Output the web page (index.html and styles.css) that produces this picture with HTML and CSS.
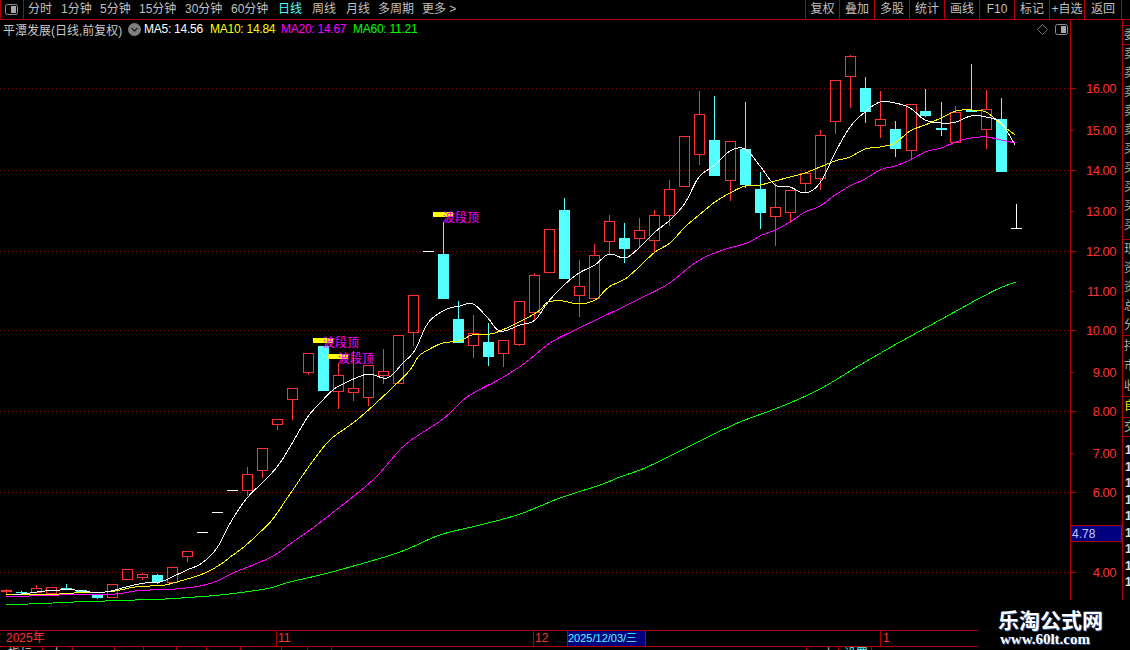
FILE: index.html
```html
<!DOCTYPE html>
<html lang="zh">
<head>
<meta charset="utf-8">
<title>平潭发展</title>
<link rel="stylesheet" href="styles.css">
</head>
<body>
<div class="app">
  <header class="topbar">
    <div class="panel-btn">
      <svg class="panel-icon" width="13" height="11" viewBox="0 0 13 11"><rect x="0.5" y="0.5" width="12" height="10" rx="2" class="pi-frame"/><rect x="6" y="2" width="5" height="7" class="pi-fill"/></svg>
    </div>
    <nav class="periods">
      <span class="p w-a">分时</span>
      <span class="p w-b">1分钟</span>
      <span class="p w-b">5分钟</span>
      <span class="p w-c">15分钟</span>
      <span class="p w-c">30分钟</span>
      <span class="p w-f">60分钟</span>
      <span class="p w-g active">日线</span>
      <span class="p w-g">周线</span>
      <span class="p w-d">月线</span>
      <span class="p w-e">多周期</span>
      <span class="p">更多 &gt;</span>
    </nav>
    <nav class="tools">
      <span class="t t-first">复权</span>
      <span class="t">叠加</span>
      <span class="t">多股</span>
      <span class="t">统计</span>
      <span class="t">画线</span>
      <span class="t">F10</span>
      <span class="t">标记</span>
      <span class="t">+自选</span>
      <span class="t t-last">返回</span>
    </nav>
  </header>

  <main class="main">
    <section class="plot">
      <div class="legend">
        <span class="title">平潭发展(日线,前复权)</span>
        <svg class="circle-icon" width="13" height="13" viewBox="0 0 13 13"><circle cx="6.5" cy="6.5" r="6.5" class="ci-bg"/><path d="M3.5 5l3 3 3-3" class="ci-chev"/></svg>
        <span class="ma ma5">MA5: 14.56</span>
        <span class="ma ma10">MA10: 14.84</span>
        <span class="ma ma20">MA20: 14.67</span>
        <span class="ma ma60">MA60: 11.21</span>
        <span class="legend-tools">
          <svg width="11" height="11" viewBox="0 0 11 11"><path d="M5.5 0.5l5 5-5 5-5-5z" class="diamond"/></svg>
          <svg width="13" height="11" viewBox="0 0 13 11"><rect x="0.5" y="0.5" width="12" height="10" rx="2" class="pi-frame"/><rect x="6" y="2" width="5" height="7" class="pi-fill"/></svg>
        </span>
      </div>
      <svg id="chart" class="chart" width="1122" height="562" viewBox="0 38 1122 562"></svg>
    </section>
    <aside class="side">
      <div class="s-block s-head"><span>委</span></div>
      <div class="s-block s-quote">
        <span>卖</span><span>卖</span><span>卖</span><span>卖</span><span>卖</span><span>买</span><span>买</span><span>买</span><span>买</span><span>买</span>
      </div>
      <div class="s-block s-fund">
        <span>现</span><span>资</span><span>资</span><span>总</span><span>分</span>
      </div>
      <div class="s-block s-hold">
        <span>持</span><span>市</span><span>收</span>
      </div>
      <div class="s-block s-self"><span>自</span></div>
      <div class="s-block s-trade"><span>交</span></div>
      <div class="s-nums">
        <span>1</span><span>1</span><span>1</span><span>1</span><span>1</span><span>1</span><span>1</span><span>1</span><span>1</span>
      </div>
    </aside>
  </main>

  <footer class="bottom">
    <div class="bottom-left">
      <div class="gap-row"></div>
      <div class="dates">
        <span class="d d-year">2025年</span>
        <span class="d d-nov">11</span>
        <span class="d d-dec">12</span>
        <span class="d-cursor">2025/12/03/三</span>
        <span class="d d-jan">1</span>
      </div>
      <div class="tabs">
        <span class="tab tab-1">指标</span>
        <span class="tab tab-2">上</span>
        <span class="tab tab-3"></span>
        <span class="tab tab-4"></span>
        <span class="tab tab-5"></span>
        <span class="tab tab-6"></span>
        <span class="tab tab-7"></span>
        <span class="tab tab-8"></span>
        <span class="tab tab-9"></span>
        <span class="tab tab-10"></span>
        <span class="tab tab-fill"></span>
        <span class="tab tab-11">上</span>
        <span class="tab tab-12 tab-cyan">设置</span>
      </div>
    </div>
    <div class="watermark">
      <div class="wm-cn">乐淘公式网</div>
      <div class="wm-en">www.60lt.com</div>
    </div>
  </footer>
</div>
<script src="chart.js"></script>
</body>
</html>
```
FILE: styles.css
```css
* { box-sizing: border-box; }
html, body { margin: 0; padding: 0; background: #000; }
body { font-family: "Liberation Sans", "Noto Sans CJK SC", sans-serif; }
.app { width: 1130px; height: 650px; background: #000; overflow: hidden; display: flex; flex-direction: column; color: #c8c8c8; }

.topbar { height: 20px; flex: none; display: flex; border-bottom: 1px solid #b00000; font-size: 12px; line-height: 19px; }
.panel-btn { width: 24px; border-right: 1px solid #b00000; border-left: 1px solid #b00000; display: flex; align-items: center; justify-content: center; padding-right: 1px; }
.pi-frame { fill: none; stroke: #909090; }
.pi-fill { fill: #a8a8a8; }
.periods { display: flex; padding-left: 4px; flex: 1; }
.p { color: #c0c0c0; white-space: nowrap; }
.w-a { width: 33px; }
.w-b { width: 39px; }
.w-c { width: 46px; }
.w-d { width: 32px; }
.w-e { width: 44px; }
.w-f { width: 47px; }
.w-g { width: 34px; }
.p.active { color: #54ffff; }
.tools { display: flex; margin-right: 8px; }
.t { width: 35px; text-align: center; border-left: 1px solid #b00000; color: #c0c0c0; white-space: nowrap; }
.t-first { width: 34px; }
.t-last { width: 38px; border-right: 1px solid #b00000; }

.main { height: 580px; flex: none; display: flex; }
.plot { width: 1122px; flex: none; }
.legend { width: 1071px; height: 18px; border-right: 1px solid #b00000; display: flex; align-items: center; font-size: 12px; white-space: nowrap; padding-left: 3px; }
.title { width: 125px; color: #c8c8c8; }
.circle-icon { margin-right: 3px; }
.ci-bg { fill: #808080; }
.ci-chev { fill: none; stroke: #222; stroke-width: 1.4; }
.ma { letter-spacing: -0.25px; }
.ma5 { color: #fff; width: 66px; }
.ma10 { color: #ffff00; width: 71px; }
.ma20 { color: #ff00ff; width: 72px; }
.ma60 { color: #00ff00; }
.legend-tools { margin-left: auto; margin-right: 2px; display: flex; gap: 7px; align-items: center; }
.diamond { fill: none; stroke: #707070; }
.chart { display: block; overflow: visible; }

.side { flex: 1; border-left: 1px solid #b00000; display: flex; flex-direction: column; font-size: 12px; line-height: 19px; overflow: hidden; height: 580px; }
.s-block { border-bottom: 1px solid #b00000; display: flex; flex-direction: column; color: #b0b0b0; }
.s-block span { display: block; width: 12px; margin-left: 1px; flex: none; }
.s-head { margin-top: 5px; height: 20px; line-height: 18px; border-top: 1px solid #b00000; }
.s-quote { height: 195px; overflow: hidden; }
.s-fund { height: 96px; }
.s-hold { height: 61px; line-height: 20px; }
.s-self { height: 21px; color: #e8e800; }
.s-trade { height: 19px; line-height: 18px; }
.s-nums { display: flex; flex-direction: column; color: #e0e0e0; font-weight: bold; padding-left: 2px; padding-top: 5px; }
.s-nums span { display: block; height: 16.5px; line-height: 16px; }

.bottom { flex: 1; display: flex; }
.bottom-left { width: 978px; flex: none; display: flex; flex-direction: column; }
.gap-row { height: 30px; flex: none; }
.dates { height: 17px; flex: none; border-top: 1px solid #b00000; border-bottom: 1px solid #b00000; display: flex; font-size: 12px; line-height: 15px; color: #ff3232; }
.d { display: block; white-space: nowrap; padding-left: 1px; }
.d-year { width: 276px; padding-left: 6px; }
.d-nov { width: 257px; border-left: 1px solid #b00000; }
.d-dec { width: 34px; border-left: 1px solid #b00000; }
.d-cursor { width: 79px; background: #000080; color: #54ffff; border-left: 1px solid #b00000; border-right: 1px solid #b00000; white-space: nowrap; font-size: 11px; }
.d-jan { margin-left: 234px; border-left: 1px solid #b00000; padding-left: 2px; }
.tabs { height: 3px; overflow: hidden; display: flex; font-size: 12px; line-height: 15px; color: #c8c8c8; }
.tab { border-right: 1px solid #b00000; padding-left: 8px; height: 3px; white-space: nowrap; }
.tab-1 { width: 43px; }
.tab-2 { width: 30px; }
.tab-3 { width: 42px; }
.tab-4 { width: 29px; }
.tab-5 { width: 33px; }
.tab-6 { width: 30px; }
.tab-7 { width: 34px; }
.tab-8 { width: 41px; }
.tab-9 { width: 26px; }
.tab-10 { width: 24px; }
.tab-fill { width: 475px; border-right: 1px solid #b00000; }
.tab-11 { width: 32px; padding-left: 16px; }
.tab-12 { width: 33px; padding-left: 5px; }
.tab-cyan { color: #54ffff; }

.watermark { flex: 1; padding: 7px 0 0 20px; white-space: nowrap; }
.wm-cn { font-family: "Noto Sans CJK SC", sans-serif; font-weight: 700; font-size: 21px; line-height: 24px; color: #fff; text-shadow: 1px 1px 0 #2a4a90; }
.wm-en { font-family: "Liberation Serif", serif; font-weight: 700; font-size: 15px; line-height: 15px; color: #fff; text-shadow: 1px 1px 0 #2a4a90; padding-left: 2px; margin-top: 1px; }

.grid { stroke: #8a0000; stroke-dasharray: 1 3; }
.axis { stroke: #b00000; }
.lbl { fill: #ff3232; font-size: 13px; letter-spacing: -0.5px; text-anchor: end; font-family: "Liberation Sans", sans-serif; }
.wick-up, .body-up { stroke: #ff3232; fill: none; }
.body-doji { fill: #ff3232; }
.wick-dn { stroke: #54ffff; }
.body-dn { fill: #54ffff; }
.wick-w { stroke: #fff; }
.line { fill: none; stroke-width: 1; }
.l5 { stroke: #fff; }
.l10 { stroke: #ffff00; }
.l20 { stroke: #ff00ff; }
.l60 { stroke: #00ff00; }
.sig-bar { fill: #ffff00; }
.sig-text { fill: #ff00ff; font-size: 12px; font-family: "Noto Sans CJK SC", sans-serif; }
.tag-box { fill: #000080; stroke: #b00000; }
.tag-text { fill: #c8c8ff; font-size: 12px; font-family: "Liberation Sans", sans-serif; }
```
FILE: chart.js
```js
// [center x, kind, top, bottom, high, low]; u=red hollow, d=cyan filled, w=white dash, f=red flat
var candles = [
[6,'f',590,592,589,594],[21,'d',592,593,591,595],[36,'u',588,592,585,592],[51,'u',587,593,587,593],
[66,'d',588,590,584,590],[81,'d',590,592,590,592],[97,'d',594,598,594,599],[112,'u',584,597,584,597],
[127,'u',569,579,569,579],[142,'u',574,577,573,580],[157,'d',575,582,574,584],[172,'u',567,582,567,583],
[187,'u',551,556,551,562],[202,'w',532,532,532,532],[217,'w',512,512,512,512],[232,'w',490,490,490,490],
[247,'u',474,490,467,496],[262,'u',448,470,448,478],[277,'u',419,424,419,430],[292,'u',388,399,388,420],
[308,'u',353,372,353,375],[323,'d',346,391,346,391],[338,'u',375,391,363,409],[353,'u',388,392,351,401],
[368,'u',365,397,365,406],[383,'u',371,375,349,384],[398,'u',335,383,335,383],[413,'u',295,332,295,346],
[428,'w',251,251,251,251],[443,'d',254,299,222,299],[458,'d',319,343,301,343],[473,'u',333,345,315,358],
[488,'d',342,357,323,366],[503,'u',340,353,340,367],[519,'u',301,344,301,346],[534,'u',275,312,273,320],
[549,'u',229,272,229,272],[564,'d',210,279,198,279],[579,'u',286,295,260,317],[594,'u',255,298,244,298],
[609,'u',221,241,215,255],[624,'d',238,249,223,263],[639,'u',230,238,218,247],[654,'u',215,240,210,253],
[669,'u',189,215,180,226],[684,'u',136,186,136,186],[699,'u',114,154,91,165],[714,'d',140,176,96,176],
[730,'u',141,180,141,201],[745,'d',149,185,102,188],[760,'d',189,213,172,229],[775,'u',207,216,183,246],
[790,'u',190,212,190,223],[805,'u',173,183,172,193],[820,'u',135,178,130,190],[835,'u',80,121,80,134],
[850,'u',56,76,55,108],[865,'d',88,112,77,123],[880,'u',119,125,91,138],[895,'d',129,149,121,157],
[911,'u',104,150,104,159],[925,'d',111,116,89,117],[941,'d',128,130,102,136],[955,'u',112,142,106,143],
[971,'d',110,112,64,112],[986,'u',109,129,90,149],[1001,'d',119,172,98,172],[1016,'w',228,228,204,228]
];
var lines = {
l60:'6,604 29,604 74,602 105,601 135,600 165,599 195,597 220,595 245,592 270,588 290,582 320,575 350,567 400,552 440,535 480,525 520,514 560,498 600,485 620,477 640,470 660,461 700,441 740,422 780,407 820,389 860,365 900,342 940,320 980,298 1000,288 1016,282',
l20:'6,597 29,596 59,595 74,594 115,594 135,591 150,590 175,589 200,586 217,581 233,573 253,565 275,555 290,544 310,530 340,507 375,478 405,445 443,419 467,397 500,379 525,363 550,343 575,330 598,319 623,307 643,297 668,284 698,261 723,250 747,243 760,236 775,230 790,222 805,212 820,206 835,195 850,186 865,179 880,170 895,166 910,160 925,152 941,148 956,142 971,138 986,137 1001,140 1015,143',
l10:'6,595 29,594 59,594 74,593 105,592 115,591 135,587 150,586 165,585 180,581 200,575 218,566 233,555 245,546 257,535 272,520 290,494 310,465 330,440 358,419 390,390 410,370 418,357 428,350 443,343 460,341 472,335 490,334 500,331 525,319 540,310 548,302 563,301 579,304 595,300 609,287 625,279 639,267 655,252 670,243 685,227 699,215 715,202 730,193 745,186 760,185 775,181 790,177 805,173 820,167 835,161 850,157 865,149 880,147 895,143 910,131 925,125 941,118 956,111 971,110 986,112 1001,124 1015,135',
l5:'14,595 30,593 45,591 60,590 75,590 90,592 105,592 115,590 130,586 145,583 160,582 172,577 187,570 202,563 217,548 232,520 247,498 262,483 277,467 290,447 307,418 320,403 333,390 345,383 368,374 387,378 403,363 415,350 428,323 445,310 460,306 473,304 487,317 500,331 520,325 535,320 548,302 563,286 579,273 595,265 609,254 625,258 639,248 655,232 670,220 685,203 699,177 715,165 730,151 745,149 760,166 775,185 790,187 805,193 820,183 835,153 850,127 865,112 880,102 895,103 910,108 925,120 941,123 956,122 971,116 986,117 1001,123 1015,145'
};
var NS = 'http://www.w3.org/2000/svg';
var svg = document.getElementById('chart');
function el(name, attrs, text) {
  var e = document.createElementNS(NS, name);
  for (var k in attrs) e.setAttribute(k, attrs[k]);
  if (text) e.textContent = text;
  svg.appendChild(e);
  return e;
}
function hline(x1, x2, y, cls) { el('line', {x1:x1, x2:x2, y1:y+0.5, y2:y+0.5, 'class':cls, 'shape-rendering':'crispEdges'}); }
function vline(x, y1, y2, cls) { el('line', {x1:x+0.5, x2:x+0.5, y1:y1, y2:y2, 'class':cls, 'shape-rendering':'crispEdges'}); }
// Catmull-Rom resampling so the moving averages bend like the real curves
function smooth(str) {
  var p = str.split(' ').map(function (s) { return s.split(',').map(Number); });
  var out = [];
  for (var i = 0; i < p.length - 1; i++) {
    var a = p[Math.max(i - 1, 0)], b = p[i], c = p[i + 1], d = p[Math.min(i + 2, p.length - 1)];
    var n = Math.max(2, Math.round((c[0] - b[0]) / 3));
    for (var j = 0; j < n; j++) {
      var t = j / n, t2 = t * t, t3 = t2 * t;
      var f = function (k) {
        return 0.5 * (2 * b[k] + (c[k] - a[k]) * t + (2 * a[k] - 5 * b[k] + 4 * c[k] - d[k]) * t2 + (3 * b[k] - a[k] - 3 * c[k] + d[k]) * t3);
      };
      out.push(f(0).toFixed(1) + ',' + f(1).toFixed(1));
    }
  }
  var last = p[p.length - 1];
  out.push(last[0] + ',' + last[1]);
  return out.join(' ');
}

[88,170,251,330,411,492,572].forEach(function (y) {
  el('line', {x1:0, x2:1070, y1:y+0.5, y2:y+0.5, 'class':'grid'});
});
vline(1070, 38, 600, 'axis');
[[16,88],[15,130],[14,170],[13,211],[12,251],[11,291],[10,330],[9,372],[8,411],[7,453],[6,492],[4,572]].forEach(function (a) {
  hline(1070, a[0] % 2 ? 1074 : 1076, a[1], 'axis');
  el('text', {x:1116, y:a[1]+5, 'class':'lbl'}, a[0] + '.00');
});
hline(1070, 1074, 533, 'axis');

candles.forEach(function (c) {
  var x = c[0], kind = c[1], t = c[2], b = c[3], hi = c[4], lo = c[5];
  if (kind === 'w') {
    if (lo > hi) vline(x, hi, lo, 'wick-w');
    hline(x - 5, x + 6, t, 'wick-w');
  } else if (kind === 'u' || kind === 'f') {
    if (hi < t) vline(x, hi, t, 'wick-up');
    if (lo > b) vline(x, b, lo, 'wick-up');
    if (kind === 'f') el('rect', {x:x-5, y:t, width:11, height:b-t, 'class':'body-doji', 'shape-rendering':'crispEdges'});
    else el('rect', {x:x-4.5, y:t+0.5, width:10, height:b-t, 'class':'body-up', 'shape-rendering':'crispEdges'});
  } else {
    if (hi < t) vline(x, hi, t, 'wick-dn');
    if (lo > b) vline(x, b, lo, 'wick-dn');
    el('rect', {x:x-5, y:t, width:11, height:b-t, 'class':'body-dn', 'shape-rendering':'crispEdges'});
  }
});
['l60','l20','l10','l5'].forEach(function (k) {
  el('polyline', {points:smooth(lines[k]), 'class':'line ' + k, 'shape-rendering':'crispEdges'});
});
[[433,212,443,222],[313,338,323,347],[328,354,338,363]].forEach(function (s) {
  el('rect', {x:s[0], y:s[1], width:20, height:5, 'class':'sig-bar'});
  el('text', {x:s[2], y:s[3], 'class':'sig-text'}, '波段顶');
});
el('rect', {x:1070.5, y:525.5, width:51, height:16, 'class':'tag-box', 'shape-rendering':'crispEdges'});
el('text', {x:1072, y:538, 'class':'tag-text'}, '4.78');
```
